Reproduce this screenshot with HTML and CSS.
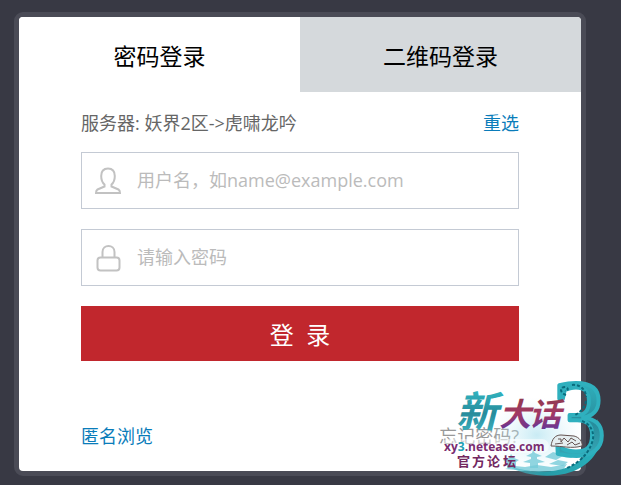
FILE: index.html
```
<!doctype html>
<html lang="zh-CN">
	<head>
		<meta charset="UTF-8" />
		<meta name="viewport" content="width=device-width, initial-scale=1.0" />
		<title>密码登录</title>
		<link rel="stylesheet" href="styles.css">
	</head>

	<body>
		<main class="login">
			<div class="tabs">
				<button type="button" class="tab active">密码登录</button>
				<button type="button" class="tab">二维码登录</button>
			</div>

			<form class="panel">
				<div class="server">
					<span>服务器: 妖界2区-&gt;虎啸龙吟</span>
					<a href="#">重选</a>
				</div>

				<div class="field">
					<label for="username" aria-label="用户名">
						<svg width="26" height="28" viewBox="0 0 26 28">
							<path d="M13 1.500C8.500 1.500 6.200 4.500 6.200 9C6.200 13 7.700 16 9.500 17.500V19.500L2.500 22.500C1.200 23.200 1 24.500 1 26H25C25 24.500 24.800 23.200 23.500 22.500L16.500 19.500V17.500C18.300 16 19.800 13 19.800 9C19.800 4.500 17.500 1.500 13 1.500Z" />
						</svg>
					</label>
					<input type="text" id="username" placeholder="用户名，如name@example.com" />
				</div>

				<div class="field">
					<label for="password" aria-label="密码">
						<svg width="26" height="28" viewBox="0 0 26 28">
							<rect x="2.500" y="13.500" width="22" height="13" rx="3" />
							<path d="M7.500 13V8C7.500 0 19.500 0 19.500 8V13" />
						</svg>
					</label>
					<input type="password" id="password" placeholder="请输入密码" />
				</div>

				<button type="submit" class="submit">登&nbsp;&nbsp;录</button>

				<div class="links">
					<a href="#">匿名浏览</a>
					<a href="#" class="forgot">忘记密码?</a>
				</div>
			</form>

			<!-- forum logo, hangs over the corner of the card -->
			<svg class="forum-logo" width="170" height="98" viewBox="0 0 170 98">
				<defs>
					<linearGradient id="teal" x1="0" y1="0" x2="0" y2="1">
						<stop offset="0" stop-color="#35c3cd" />
						<stop offset=".55" stop-color="#278c9c" />
						<stop offset="1" stop-color="#43bac8" />
					</linearGradient>
					<linearGradient id="plum" x1="0" y1="0" x2="0" y2="1">
						<stop offset="0" stop-color="#873848" />
						<stop offset=".5" stop-color="#a33963" />
						<stop offset="1" stop-color="#5134a8" />
					</linearGradient>
					<linearGradient id="tail" x1="0" y1="0" x2="1" y2="0">
						<stop offset="0" stop-color="#55cbd9" stop-opacity=".4" />
						<stop offset=".4" stop-color="#279aa6" />
						<stop offset="1" stop-color="#27b2bd" />
					</linearGradient>
					<radialGradient id="sky">
						<stop offset="0" stop-color="#a5deed" stop-opacity=".6" />
						<stop offset="1" stop-color="#d7f2fa" stop-opacity="0" />
					</radialGradient>
				</defs>

				<ellipse cx="98" cy="56" rx="48" ry="38" fill="url(#sky)" />
				<rect x="2" y="60" width="108" height="14" rx="7" fill="#fff" fill-opacity=".5" />

				<g fill="#75cbd8" fill-opacity=".8">
					<path d="M66 90L76 87L86 88L98 86L112 88L128 85L124 91L100 93Z" />
					<path d="M94 71L96 74L103 77L98 78V80L106 83L99 84V89H91V84L84 83L92 80V78L87 77L93 74Z" />
					<path d="M72 75L75 79L80 81L77 83V89H68V83L64 81L70 79Z" />
					<path d="M106 78L114 73L121 75L128 71L139 75L132 79L124 77L117 81ZM110 85L119 81L129 83L124 87Z" />
				</g>

				<path d="M158 40C163 66 142 87 119 91C98 95 80 91 66 85C82 97 112 100 132 93C160 83 168 58 158 40Z" fill="url(#tail)" />
				<text class="three" x="113" y="76">3</text>
				<g class="scales">
					<path d="M127 16C121 14 120 8 126 8C130 8 129 13 126 12M133 6C140 5 147 10 147 18M147 22C146 28 142 33 136 36M143 42C151 45 155 52 154 60C151 74 141 83 128 89" />
				</g>

				<g class="beast">
					<path d="M112 67C113 60 116 56 122 56L135 57C140 58 144 63 143 67C132 70 124 67 112 67Z" />
					<path d="M119 60H122V63L125 59L129 63L132 59L137 62M116 65L124 64M128 66L133 63L136 66L141 64" />
				</g>

				<text class="brush xin" x="17" y="48">新</text>
				<text class="brush" x="60" y="47">大</text>
				<text class="brush" x="90" y="47">话</text>
				<text class="site" x="5" y="72">xy<tspan fill="#22a0b4">3</tspan>.netease.com</text>
				<text class="forum" y="87"><tspan x="18">官</tspan><tspan x="33">方</tspan><tspan x="48">论</tspan><tspan x="64">坛</tspan></text>
			</svg>
		</main>
	</body>
</html>
```
FILE: styles.css
```
* {
	box-sizing: border-box;
}

body {
	margin: 0;
	padding: 12px 35px 9px 14px;
	background-color: #383944;
	font-family: "Open Sans", "Noto Sans CJK SC", sans-serif;
	font-size: 18px;
	color: #666;
}

button,
input {
	font-family: inherit;
}

a {
	color: #0a7cba;
	text-decoration: none;
}

.login {
	position: relative;
	border: 5px solid #4a4b56;
	border-radius: 9px;
	background-color: #fff;
}

.tabs {
	display: grid;
	grid-template-columns: 1fr 1fr;
	border-radius: 4px 4px 0 0;
	overflow: hidden;
}

.tab {
	height: 75px;
	padding: 0;
	border: none;
	background-color: #d5d9dc;
	font-size: 23px;
	color: #000;
	cursor: pointer;
}

.tab.active {
	background-color: #fff;
}

.panel {
	display: flex;
	flex-direction: column;
	gap: 20px;
	padding: 16px 62px 20px;
}

.server,
.links {
	display: flex;
	justify-content: space-between;
	line-height: 30px;
}

.server {
	margin-bottom: -6px;
}

.field {
	display: flex;
	align-items: center;
	height: 57px;
	padding-left: 13px;
	border: 1px solid #c4cad4;
}

.field label {
	display: flex;
}

.field svg {
	fill: none;
	stroke: #c2c2c2;
	stroke-width: 2;
}

.field input {
	flex: 1;
	min-width: 0;
	height: 53px;
	padding: 0 12px 2px 16px;
	border: none;
	outline: none;
	background: none;
	font-size: 18px;
	color: #555;
}

.field input::placeholder {
	color: #bbb;
}

.submit {
	height: 55px;
	border: none;
	background-color: #c1272d;
	font-size: 24px;
	color: #fff;
	cursor: pointer;
}

.links {
	margin-top: 40px;
}

.links .forgot {
	color: #999;
}

.forum-logo {
	position: absolute;
	right: -28px;
	bottom: -6px;
	pointer-events: none;
}

.brush {
	font-size: 32px;
	font-style: italic;
	font-weight: 700;
	fill: url(#plum);
}

.xin {
	font-size: 42px;
	fill: url(#teal);
}

.three {
	font-family: "Liberation Serif", serif;
	font-size: 108px;
	fill: url(#teal);
	stroke: #2fb0be;
	stroke-width: 4;
	stroke-linejoin: round;
}

.scales {
	fill: none;
	stroke: #096b7c;
	stroke-width: 2;
	stroke-dasharray: 3 2;
}

.beast {
	fill: #e5eef0;
	stroke: #645452;
}

.site {
	font-size: 12px;
	font-weight: 700;
	fill: #7a2c70;
}

.forum {
	font-size: 13px;
	font-weight: 700;
	fill: #73285f;
}
```
